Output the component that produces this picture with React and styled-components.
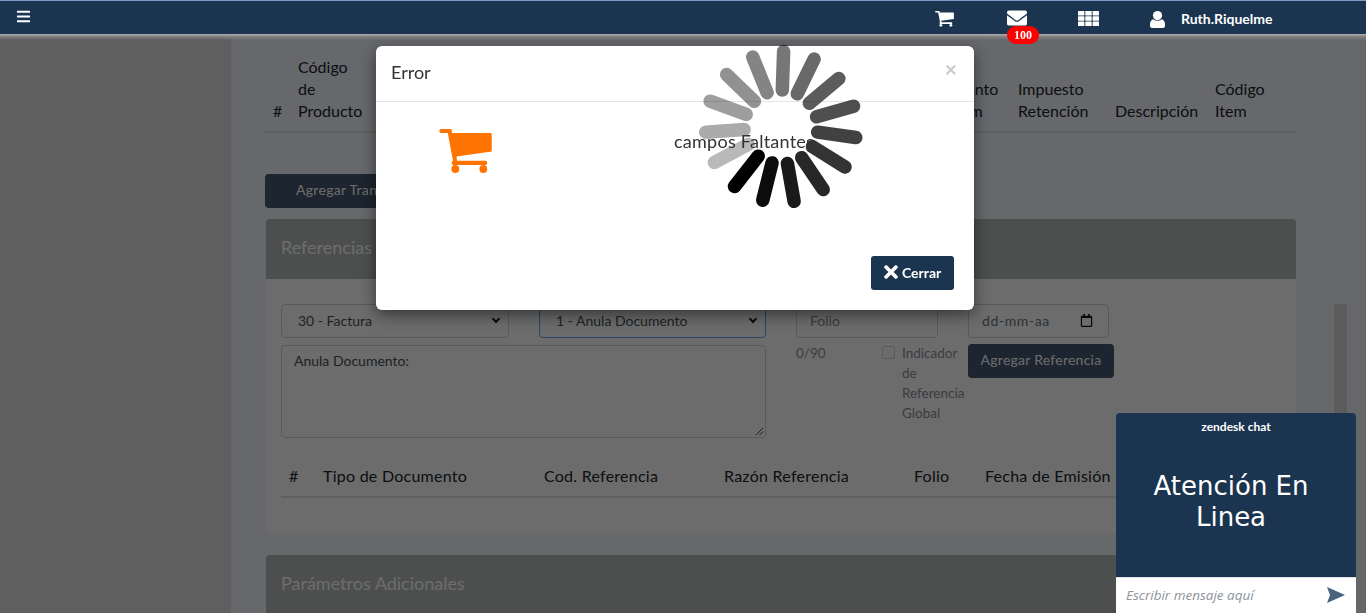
import React from "react";
import styled, { createGlobalStyle } from "styled-components";
import { FaBars, FaEnvelope, FaTimes, FaRegCalendar } from "react-icons/fa";

const fontStack = `Lato, "Open Sans", "Liberation Sans", sans-serif`;

const productColumns = [
	"Código de Producto",
	"Cantidad",
	"Precio",
	"Descuento",
	"Monto Item",
	"Impuesto Retención",
	"Descripción",
	"Código Item",
];
const referenceColumns = [
	"#",
	"Tipo de Documento",
	"Cod. Referencia",
	"Razón Referencia",
	"Folio",
	"Fecha de Emisión",
];
const SPOKES = 15;

const CartIcon = ({ width, color }) => (
	<svg width={width} viewBox="0 0 53 44" fill={color}>
		<path d="M2 0H12.5L13 4H51.5Q52.7 4 52.7 5.2V22.5L17.5 27.5L18 31.7H46.5Q48.3 31.7 48.3 34Q48.3 36 46.5 36H14.5Q12.7 36 12.7 34Q12.7 32 14 31.7L8.8 4H2Q.3 4 .3 2T2 0Z" />
		<circle cx="16.3" cy="40" r="3.9" />
		<circle cx="44.3" cy="40" r="3.9" />
	</svg>
);

const GridIcon = () => (
	<svg width="21" height="15" viewBox="0 0 21 15" fill="#fff">
		{[0, 7.3, 14.6].map((x) =>
			[0, 5.2, 10.4].map((y) => (
				<rect key={`${x}-${y}`} x={x} y={y} width="6.4" height="4.6" rx="0.6" />
			))
		)}
	</svg>
);

const UserIcon = () => (
	<svg width="15" height="17" viewBox="0 0 15 17" fill="#fff">
		<circle cx="7.5" cy="4.6" r="4.6" />
		<path d="M3.2 8.2Q7.5 11.2 11.8 8.2Q15 9.4 15 13.5V15Q15 17 12.8 17H2.2Q0 17 0 15V13.5Q0 9.4 3.2 8.2Z" />
	</svg>
);

const App = () => {
	return (
		<>
			<GlobalStyle />
			<Navbar>
				<MenuButton>
					<FaBars />
				</MenuButton>
				<NavIcon $left={935} $top={10}>
					<CartIcon width={19} color="#fff" />
				</NavIcon>
				<NavIcon $left={1007} $top={7}>
					<FaEnvelope size={20} />
					<Badge>100</Badge>
				</NavIcon>
				<NavIcon $left={1078} $top={10}>
					<GridIcon />
				</NavIcon>
				<NavIcon $left={1150} $top={10}>
					<UserIcon />
					<UserName>Ruth.Riquelme</UserName>
				</NavIcon>
			</Navbar>

			<Page>
				<Sidebar />
				<Content>
					<ProductTable>
						<HashHead>#</HashHead>
						{productColumns.map((column) => (
							<ProductHead key={column}>{column}</ProductHead>
						))}
					</ProductTable>
					<AddButton>Agregar Transacción</AddButton>

					<Card>
						<CardHeader>Referencias</CardHeader>
						<CardBody>
							<FormGrid>
								<SelectBox>
									<span>30 - Factura</span>
									<Chevron />
								</SelectBox>
								<SelectBox $focused>
									<span>1 - Anula Documento</span>
									<Chevron />
								</SelectBox>
								<InputBox>Folio</InputBox>
								<DateBox>
									dd-mm-aa
									<FaRegCalendar size={13} color="#111" />
								</DateBox>
								<TextArea>
									Anula Documento:
									<Grip viewBox="0 0 10 10">
										<path d="M1 9 9 1M5 9 9 5" stroke="#333" fill="none" />
									</Grip>
								</TextArea>
								<FolioMeta>
									<span>0/90</span>
									<CheckLabel>
										<CheckMark />
										<span>Indicador de Referencia Global</span>
									</CheckLabel>
								</FolioMeta>
								<SmallButton>Agregar Referencia</SmallButton>
							</FormGrid>
							<ReferenceTable>
								{referenceColumns.map((column) => (
									<span key={column}>{column}</span>
								))}
							</ReferenceTable>
						</CardBody>
					</Card>

					<Card>
						<CardHeader>Parámetros Adicionales</CardHeader>
					</Card>
				</Content>
				<ScrollTrack>
					<ScrollThumb />
				</ScrollTrack>
			</Page>

			<Backdrop />

			<Modal>
				<ModalHeader>
					<ModalTitle>Error</ModalTitle>
					<CloseMark>×</CloseMark>
				</ModalHeader>
				<ModalBody>
					<CartIcon width={53} color="#ff7300" />
					<ModalMessage>campos Faltantes</ModalMessage>
				</ModalBody>
				<ModalFooter>
					<CloseButton>
						<FaTimes size={20} />
						Cerrar
					</CloseButton>
				</ModalFooter>
				<Spinner viewBox="0 0 170 170">
					{Array.from({ length: SPOKES }, (_, i) => (
						<line
							key={i}
							x1="85"
							y1="48"
							x2="85"
							y2="9.5"
							stroke="#000"
							strokeWidth="13.5"
							strokeLinecap="round"
							opacity={1 - (i * 0.78) / SPOKES}
							transform={`rotate(${218 - i * 24} 85 85)`}
						/>
					))}
				</Spinner>
			</Modal>

			<ChatWidget>
				<ChatBrand>zendesk chat</ChatBrand>
				<ChatTitle>Atención En Linea</ChatTitle>
				<ChatInput>
					<span>Escribir mensaje aquí</span>
					<svg width="18" height="16" viewBox="0 0 18 16">
						<path d="M0 0 18 8 0 16 3 8Z" fill="#48637d" />
					</svg>
				</ChatInput>
			</ChatWidget>
		</>
	);
};

const GlobalStyle = createGlobalStyle`
	html, body {
		margin: 0;
		height: 100%;
		overflow: hidden;
		font-family: ${fontStack};
		color: #212529;
		background: #f0f5fe;
	}
	* {
		box-sizing: border-box;
	}
`;

const Navbar = styled.header`
	position: fixed;
	top: 0;
	left: 0;
	right: 0;
	height: 34px;
	background: #1b3550;
	border-top: 1px solid #7f99c4;
	z-index: 20;
	color: #fff;
	&::after {
		content: "";
		position: absolute;
		left: 0;
		right: 0;
		top: 33px;
		height: 6px;
		background: linear-gradient(#b0b0b0, #808080 45%, rgba(70, 70, 70, 0));
	}
`;
const MenuButton = styled.div`
	position: absolute;
	left: 16px;
	top: 8px;
	font-size: 15px;
	line-height: 15px;
`;
const NavIcon = styled.div`
	position: absolute;
	left: ${(p) => p.$left}px;
	top: ${(p) => p.$top}px;
	display: flex;
	align-items: center;
`;
const Badge = styled.span`
	position: absolute;
	z-index: 1;
	left: 0;
	top: 18px;
	width: 32px;
	height: 18px;
	border-radius: 9px;
	background: #f00;
	color: #fff;
	font: bold 12px/18px "Liberation Serif", serif;
	text-align: center;
`;
const UserName = styled.span`
	position: absolute;
	left: 31px;
	top: -1px;
	font-size: 14px;
	font-weight: 700;
	white-space: nowrap;
`;

const Page = styled.div`
	display: flex;
	height: 613px;
	overflow: hidden;
`;
const Sidebar = styled.aside`
	flex: 0 0 231px;
	background: #e0e0e0;
`;
const Content = styled.main`
	flex: 0 0 1103px;
	padding: 56px 38px 0 34px;
`;
const ScrollTrack = styled.div`
	flex: 1;
	padding-top: 304px;
	background: #f0f4f6;
`;
const ScrollThumb = styled.div`
	width: 13px;
	height: 309px;
	background: #d9dadb;
`;

const ProductTable = styled.div`
	display: grid;
	grid-template-columns: 33px 100px 185px 185px 183px 67px 97px 100px 1fr;
	align-items: end;
	height: 77px;
	padding-bottom: 10px;
	border-bottom: 2px solid #dee2e6;
	font-size: 16px;
	line-height: 22px;
`;
const HashHead = styled.span`
	padding-left: 8px;
`;
const ProductHead = styled.span`
	max-width: 70px;
`;
const AddButton = styled.div`
	width: 220px;
	height: 34px;
	margin-top: 41px;
	padding-left: 31px;
	border-radius: 4px;
	background: #425771;
	color: #fff;
	font-size: 14px;
	letter-spacing: 0.3px;
	line-height: 32px;
	white-space: nowrap;
`;
const Card = styled.section`
	width: 1030px;
	margin: 11px 0 22px 1px;
	border-radius: 4px;
	background: #fff;
`;
const CardHeader = styled.div`
	height: 60px;
	padding-left: 15px;
	border-radius: 4px 4px 0 0;
	background: #b5bab8;
	color: #fff;
	font-size: 18px;
	line-height: 56px;
`;
const CardBody = styled.div`
	height: 254px;
	padding: 25px 15px 0;
`;
const FormGrid = styled.div`
	display: grid;
	grid-template-columns: 228px 227px 142px 146px;
	grid-template-rows: 34px 93px;
	column-gap: 30px;
	row-gap: 7px;
	font-size: 14px;
	color: #495057;
`;
const fieldBorder = `1px solid #ced4da`;
const SelectBox = styled.div`
	display: flex;
	align-items: center;
	justify-content: space-between;
	padding: 0 5px 2px 16px;
	border: ${(p) => (p.$focused ? "1px solid #5aa7ef" : fieldBorder)};
	border-radius: 4px;
`;
const Chevron = styled.i`
	width: 6px;
	height: 6px;
	margin: -2px 4px 0 0;
	border: solid #222;
	border-width: 0 2px 2px 0;
	transform: rotate(45deg);
`;
const InputBox = styled.div`
	display: flex;
	align-items: center;
	justify-content: space-between;
	width: 142px;
	padding: 0 15px 2px 13px;
	border: ${fieldBorder};
	border-radius: 4px;
	color: #8a9099;
`;
const DateBox = styled(InputBox)`
	width: 141px;
	letter-spacing: 0.6px;
	color: #6c757d;
`;
const TextArea = styled.div`
	position: relative;
	grid-column: 1 / span 2;
	padding: 6px 12px;
	border: ${fieldBorder};
	border-radius: 4px;
`;
const Grip = styled.svg`
	position: absolute;
	right: 1px;
	bottom: 1px;
	width: 9px;
	height: 9px;
`;
const FolioMeta = styled.div`
	display: flex;
	justify-content: space-between;
	margin-top: -2px;
	font-size: 13.5px;
	line-height: 20px;
	color: #8a9099;
`;
const CheckLabel = styled.div`
	display: flex;
	gap: 7px;
	width: 81px;
	margin-right: -25px;
`;
const CheckMark = styled.i`
	flex: 0 0 13px;
	height: 13px;
	margin-top: 3px;
	border: ${fieldBorder};
	border-radius: 2px;
`;
const SmallButton = styled.div`
	width: 146px;
	height: 34px;
	margin-top: -1px;
	border-radius: 4px;
	background: #425771;
	color: #fff;
	font-size: 14px;
	letter-spacing: 0.25px;
	line-height: 31px;
	text-align: center;
`;
const ReferenceTable = styled.div`
	display: grid;
	grid-template-columns: 34px 221px 180px 190px 71px 1fr;
	margin-top: 26px;
	padding: 0 0 8px 8px;
	border-bottom: 2px solid #dee2e6;
	font-size: 16px;
	letter-spacing: 0.25px;
	line-height: 24px;
	color: #212529;
	white-space: nowrap;
`;

const Backdrop = styled.div`
	position: fixed;
	inset: 0;
	background: rgba(0, 0, 0, 0.575);
	z-index: 10;
`;
const Modal = styled.div`
	position: fixed;
	left: 376px;
	top: 46px;
	display: flex;
	flex-direction: column;
	width: 598px;
	height: 264px;
	border-radius: 6px;
	background: #fff;
	box-shadow: 0 5px 15px rgba(0, 0, 0, 0.5);
	z-index: 30;
`;
const ModalHeader = styled.div`
	display: flex;
	align-items: center;
	justify-content: space-between;
	height: 56px;
	padding: 0 17px 3px 15px;
	border-bottom: 1px solid #e5e5e5;
`;
const ModalTitle = styled.h5`
	margin: 0;
	font-size: 18px;
	font-weight: 400;
	color: #333;
`;
const CloseMark = styled.span`
	margin-top: -7px;
	font-size: 21px;
	font-weight: 700;
	color: #c8c8c8;
`;
const ModalBody = styled.div`
	position: relative;
	display: flex;
	flex: 1;
	align-items: flex-start;
	padding: 27px 0 0 63px;
`;
const ModalMessage = styled.p`
	position: relative;
	z-index: 1;
	margin: 0 0 0 182px;
	font-size: 18px;
	font-weight: 400;
	letter-spacing: 0.25px;
	line-height: 24px;
	color: #333;
`;
const ModalFooter = styled.div`
	display: flex;
	justify-content: flex-end;
	padding: 0 20px 20px;
`;
const CloseButton = styled.div`
	display: flex;
	align-items: center;
	gap: 1px;
	width: 83px;
	height: 34px;
	padding: 0 0 2px 10px;
	border-radius: 3px;
	background: #1b3550;
	color: #fff;
	font-size: 14px;
	font-weight: 700;
`;
const Spinner = styled.svg`
	position: absolute;
	left: 320px;
	top: -4px;
	width: 170px;
	height: 170px;
`;

const ChatWidget = styled.aside`
	position: fixed;
	left: 1116px;
	top: 413px;
	display: flex;
	flex-direction: column;
	width: 240px;
	height: 200px;
	border-radius: 4px 4px 0 0;
	background: #1b3550;
	color: #fff;
	z-index: 40;
`;
const ChatBrand = styled.div`
	padding-top: 6px;
	font-size: 12px;
	font-weight: 700;
	line-height: 15px;
	text-align: center;
`;
const ChatTitle = styled.div`
	display: flex;
	flex: 1;
	align-items: center;
	justify-content: center;
	padding: 0 30px 7px 20px;
	font-family: "DejaVu Sans", sans-serif;
	font-size: 26px;
	line-height: 31px;
	text-align: center;
`;
const ChatInput = styled.div`
	display: flex;
	align-items: center;
	justify-content: space-between;
	height: 36px;
	padding: 0 11px 2px 10px;
	border-top: 1px solid #dfe3ea;
	background: #fff;
	color: #8d939b;
	font-family: "Open Sans", sans-serif;
	font-size: 13.5px;
	font-style: italic;
`;

export default App;
